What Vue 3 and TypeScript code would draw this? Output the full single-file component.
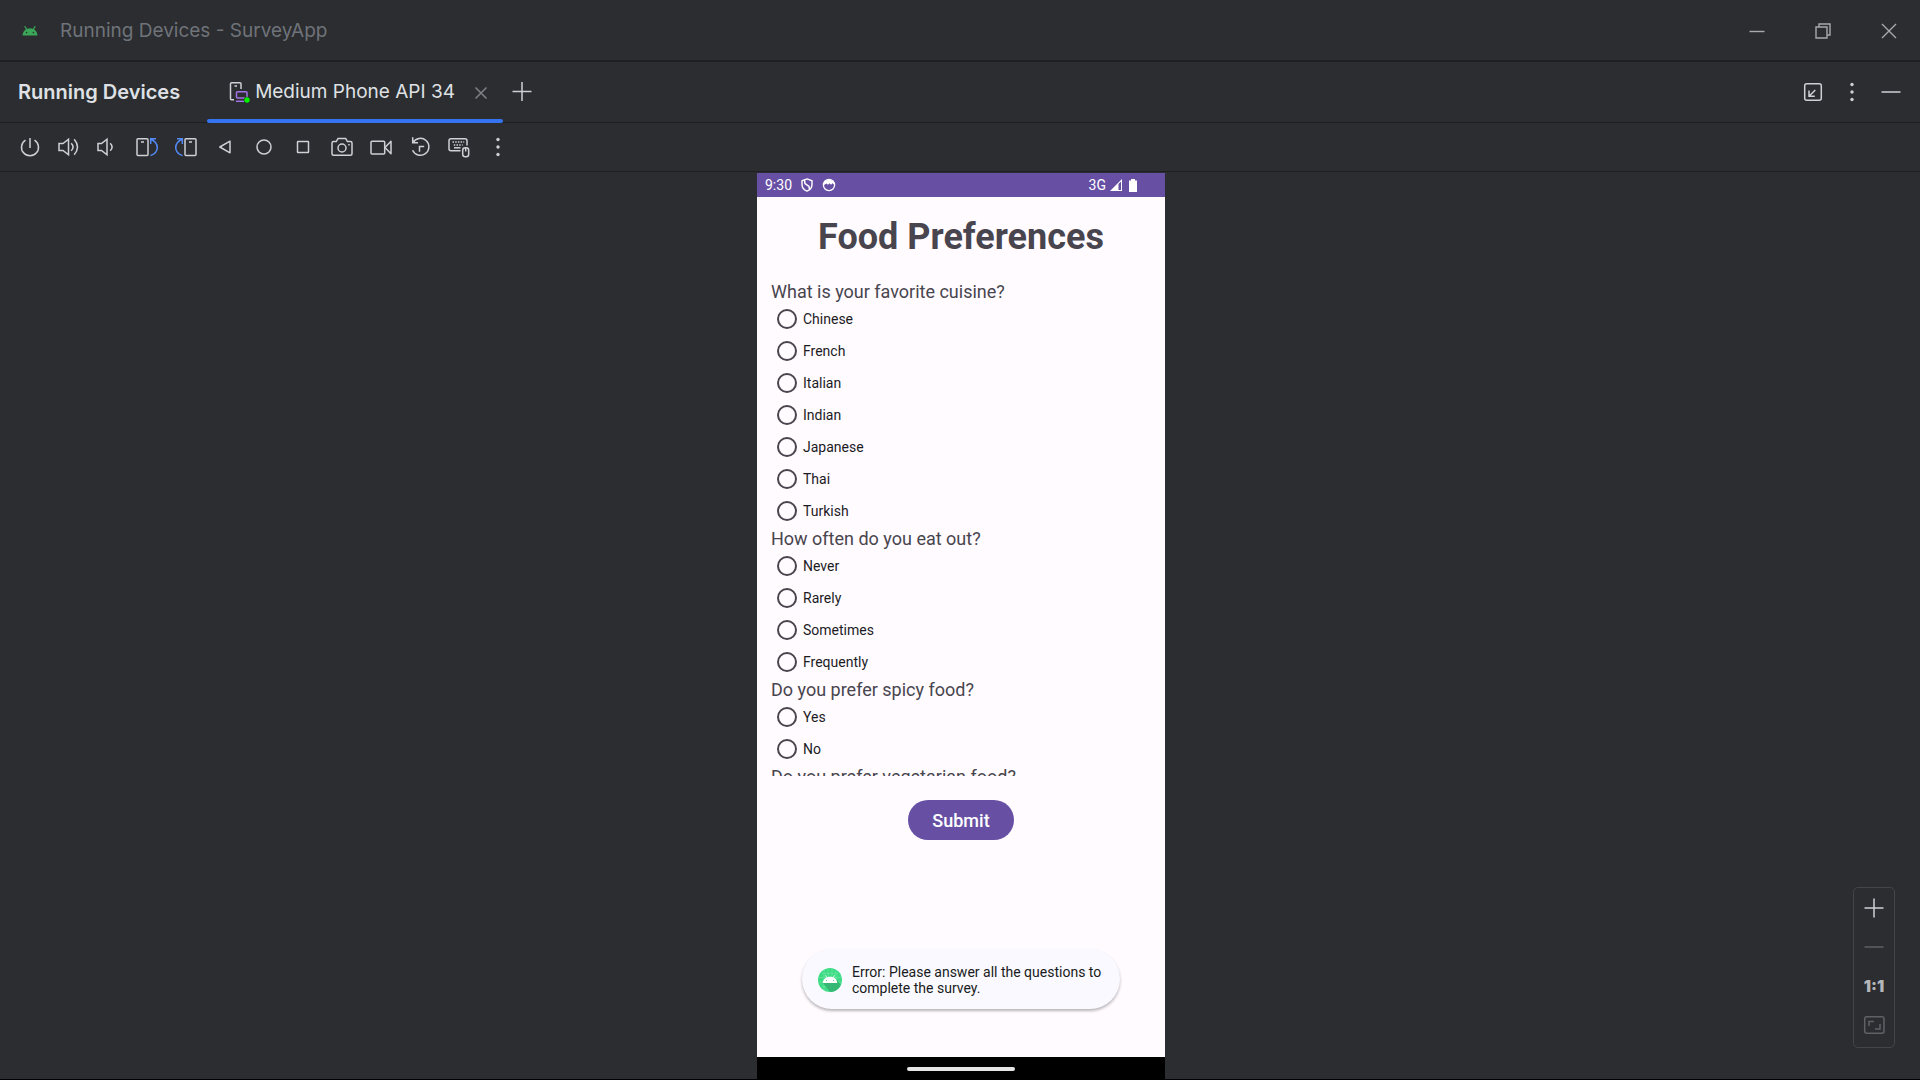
<script setup lang="ts">
import { ref } from 'vue'

interface Question {
  id: string
  text: string
  options: string[]
}

const questions: Question[] = [
  {
    id: 'cuisine',
    text: 'What is your favorite cuisine?',
    options: ['Chinese', 'French', 'Italian', 'Indian', 'Japanese', 'Thai', 'Turkish'],
  },
  {
    id: 'eat-out',
    text: 'How often do you eat out?',
    options: ['Never', 'Rarely', 'Sometimes', 'Frequently'],
  },
  { id: 'spicy', text: 'Do you prefer spicy food?', options: ['Yes', 'No'] },
  { id: 'vegetarian', text: 'Do you prefer vegetarian food?', options: [] },
]

const answers = ref<Record<string, string>>({})
</script>

<template>
  <div class="window">
    <header class="titlebar">
      <svg class="app-icon" viewBox="0 0 16 10" aria-hidden="true">
        <path d="M3 .6L4.6 3.2M13 .6L11.4 3.2" stroke="#3aa657" stroke-width="1.2" stroke-linecap="round" />
        <path d="M.5 9.5C.8 5 4 2.2 8 2.2S15.200 5 15.500 9.500Z" fill="#3aa657" />
        <circle cx="4.600" cy="6.600" r=".8" fill="#2b2d30" />
        <circle cx="11.400" cy="6.600" r=".8" fill="#2b2d30" />
      </svg>
      <span class="window-title">Running Devices - SurveyApp</span>
      <div class="window-controls">
        <button type="button" aria-label="Minimize">
          <svg viewBox="0 0 24 24"><path d="M4.500 12.500H19.500" /></svg>
        </button>
        <button type="button" aria-label="Restore">
          <svg viewBox="0 0 24 24"><path d="M5 8H16V19H5ZM8 8V5H19V16H16" /></svg>
        </button>
        <button type="button" aria-label="Close">
          <svg viewBox="0 0 24 24"><path d="M5 5L19 19M19 5L5 19" /></svg>
        </button>
      </div>
    </header>

    <nav class="tabbar">
      <h1 class="tool-title">Running Devices</h1>
      <div class="tab">
        <svg class="tab-icon" viewBox="0 0 24 24" aria-hidden="true">
          <path d="M7 19.700H4.500A1 1 0 0 1 3.500 18.700V3.700A1 1 0 0 1 4.500 2.700H13A1 1 0 0 1 14 3.700V9" stroke="#ced0d6" stroke-width="1.500" fill="none" />
          <path d="M7.500 6H10" stroke="#ced0d6" stroke-width="1.500" />
          <rect x="9.500" y="11.700" width="10.500" height="6.300" rx="1" stroke="#a571e6" stroke-width="1.500" fill="none" />
          <path d="M9 21.300H17" stroke="#a571e6" stroke-width="1.500" />
          <circle cx="20" cy="20" r="3.200" fill="#2b2d30" />
          <circle cx="20" cy="20" r="2.700" fill="#00f000" />
        </svg>
        <span>Medium Phone API 34</span>
        <button class="tab-close" type="button" aria-label="Close tab">
          <svg viewBox="0 0 24 24"><path d="M6.500 7.500L17.500 18.500M17.500 7.500L6.500 18.500" /></svg>
        </button>
      </div>
      <button class="tab-add" type="button" aria-label="Add device">
        <svg class="ic" viewBox="0 0 24 24"><path d="M12 2V21M2.500 11.500H21.500" /></svg>
      </button>
      <div class="tab-tools">
        <button type="button" aria-label="Dock">
          <svg class="ic" viewBox="0 0 24 24"><rect x="3.700" y="3.700" width="16.600" height="16.600" rx="2" /><path d="M14.300 10L8.300 16M8 10.500V16.300H13.800" /></svg>
        </button>
        <button type="button" aria-label="Options">
          <svg class="dots" viewBox="0 0 24 24"><circle cx="12" cy="4.500" r="1.700" /><circle cx="12" cy="12" r="1.700" /><circle cx="12" cy="19.500" r="1.700" /></svg>
        </button>
        <button type="button" aria-label="Hide">
          <svg class="ic" viewBox="0 0 24 24"><path d="M2.500 12H21.500" /></svg>
        </button>
      </div>
    </nav>

    <div class="toolbar" role="toolbar" aria-label="Device controls">
      <button type="button" aria-label="Power">
        <svg class="ic" viewBox="0 0 24 24"><path d="M7.500 5.100A8.500 8.500 0 1 0 16.500 5.100M12 3V13" /></svg>
      </button>
      <button type="button" aria-label="Volume up">
        <svg class="ic" viewBox="0 0 24 24"><path d="M2 8.500H6L11.500 4.200V19.800L6 15.500H2ZM14.200 8.200Q18 12 14.200 15.800M17.200 4.300Q23.800 12 17.200 19.700" /></svg>
      </button>
      <button type="button" aria-label="Volume down">
        <svg class="ic" viewBox="0 0 24 24"><path d="M2 8.500H5.500L11 4.200V19.800L5.500 15.500H2ZM14.200 8.200Q18 12 14.200 15.800" /></svg>
      </button>
      <button type="button" aria-label="Rotate left">
        <svg class="ic" viewBox="0 0 24 24"><rect x="2" y="3.700" width="11" height="16.800" rx="1" /><path d="M6 7H9" /><path class="blue" d="M21 3.800H15.700V9M15.900 4C24.500 8.500 24.500 17 15.500 20.600" /></svg>
      </button>
      <button type="button" aria-label="Rotate right">
        <svg class="ic" viewBox="0 0 24 24"><rect x="11" y="3.700" width="11" height="16.800" rx="1" /><path d="M15 7H18" /><path class="blue" d="M3 3.800H8.300V9M8.100 4C-.5 8.500 -.5 17 8.500 20.600" /></svg>
      </button>
      <button type="button" aria-label="Back">
        <svg class="ic" viewBox="0 0 24 24"><path d="M6.800 12L17 6.200V17.800Z" stroke-linejoin="round" /></svg>
      </button>
      <button type="button" aria-label="Home">
        <svg class="ic" viewBox="0 0 24 24"><circle cx="12" cy="12" r="7" /></svg>
      </button>
      <button type="button" aria-label="Overview">
        <svg class="ic" viewBox="0 0 24 24"><rect x="6.500" y="6.500" width="11" height="11" rx=".5" /></svg>
      </button>
      <button type="button" aria-label="Screenshot">
        <svg class="ic" viewBox="0 0 24 24"><path d="M2 8Q2 6.500 3.500 6.500H6.300L8 3.500H15.700L17.400 6.500H20.500Q22 6.500 22 8V18.800Q22 20.300 20.500 20.300H3.500Q2 20.300 2 18.800Z" /><circle cx="12" cy="13" r="4" /><path d="M18.200 9.700H19.700" /></svg>
      </button>
      <button type="button" aria-label="Record screen">
        <svg class="ic" viewBox="0 0 24 24"><rect x="2" y="6.200" width="13.700" height="12.800" rx="1" /><path d="M16 12.500L22 6.300V18.700Z" stroke-linejoin="round" /></svg>
      </button>
      <button type="button" aria-label="Snapshots">
        <svg class="ic" viewBox="0 0 24 24"><path d="M4.700 2.300V7.700H10M5 7.600A8.500 8.500 0 1 1 4.600 15.200M11.500 16.700V11.500H16.200" /></svg>
      </button>
      <button type="button" aria-label="Hardware input">
        <svg class="ic" viewBox="0 0 24 24">
          <path d="M13.500 15.800H4Q2 15.800 2 13.800V5.700Q2 3.700 4 3.700H18Q20 3.700 20 5.700V10.500" />
          <path d="M5.500 7H17.200M6.800 10H15.700" stroke-dasharray="1.500 1.200" /><path d="M7 12.800H13.500" />
          <rect x="15.700" y="12.700" width="6" height="9" rx="2.500" /><path d="M18.700 13V16.500" />
        </svg>
      </button>
      <button type="button" aria-label="More">
        <svg class="dots" viewBox="0 0 24 24"><circle cx="12" cy="4.500" r="1.700" /><circle cx="12" cy="12" r="1.700" /><circle cx="12" cy="19.500" r="1.700" /></svg>
      </button>
    </div>

    <main class="stage">
      <section class="phone">
        <div class="status">
          <span>9:30</span>
          <svg class="status-icon" viewBox="0 0 14 14" aria-hidden="true">
            <path d="M7 .9L12 2.800V6.500C12 9.800 10 12 7 13.200C4 12 2 9.800 2 6.500V2.800Z" fill="none" stroke="#fff" stroke-width="1.400" />
            <path d="M4.500 2L5 5.500L9 8.500L9.500 11.500" fill="none" stroke="#fff" stroke-width="1.500" />
          </svg>
          <svg class="status-icon" viewBox="0 0 14 14" aria-hidden="true">
            <circle cx="7" cy="7" r="5.600" fill="none" stroke="#fff" stroke-width="1.300" />
            <path d="M2 3.800Q7 -.5 12 3.800V6.500L10.500 5.300L9 6.800L7.500 5.300L6 6.800L4.500 5.500L2 7Z" fill="#fff" />
          </svg>
          <span class="network">3G</span>
          <svg class="signal" viewBox="0 0 12 12" aria-hidden="true">
            <path d="M0 12L12 0V12Z" fill="#fff" /><path d="M8.500 5V11H11V2.500Z" fill="#6750a4" />
          </svg>
          <svg class="battery" viewBox="0 0 8 13" aria-hidden="true"><path d="M0 1.500H2V0H6V1.500H8V13H0Z" fill="#fff" /></svg>
        </div>

        <h2 class="heading">Food Preferences</h2>

        <form class="survey" @submit.prevent>
          <div class="questions">
            <fieldset v-for="q in questions" :key="q.id">
              <legend>{{ q.text }}</legend>
              <label v-for="option in q.options" :key="option" class="option">
                <input v-model="answers[q.id]" type="radio" :name="q.id" :value="option" />
                <span>{{ option }}</span>
              </label>
            </fieldset>
          </div>
          <div class="actions">
            <button class="submit" type="submit">Submit</button>
          </div>
        </form>

        <div class="toast" role="alert">
          <svg class="toast-icon" viewBox="0 0 24 24" aria-hidden="true">
            <circle cx="12" cy="12" r="12" fill="#3ddc84" />
            <path d="M4 5.500H20M1 9.500H23M1 14H23M4 18.500H20M6 2V22M10 .5V23.500M14 .5V23.500M18 2V22" stroke="#7be8ac" stroke-width=".5" />
            <path d="M5 15L12 23.900A12 12 0 0 0 22.800 17L19 12Z" fill="#35b873" />
            <path d="M7.500 7.300L9 9.800M16.500 7.300L15 9.800" stroke="#fff" stroke-width=".8" />
            <path d="M4.800 15C5 11.300 8 8.800 12 8.800S19 11.300 19.200 15Z" fill="#fff" />
            <circle cx="8.500" cy="12.500" r=".6" fill="#35b873" /><circle cx="15.500" cy="12.500" r=".6" fill="#35b873" />
          </svg>
          <p>Error: Please answer all the questions to complete the survey.</p>
        </div>

        <div class="gesture"><span class="handle"></span></div>
      </section>

      <div class="zoom">
        <button type="button" aria-label="Zoom in">
          <svg class="ic" viewBox="0 0 24 24"><path d="M12 2.500V21.500M2.500 12H21.500" /></svg>
        </button>
        <button type="button" aria-label="Zoom out">
          <svg class="ic dim" viewBox="0 0 24 24"><path d="M2.500 12H21.500" /></svg>
        </button>
        <button type="button" class="one">1:1</button>
        <button type="button" aria-label="Fit to screen">
          <svg class="ic dim" viewBox="0 0 24 24"><rect x="2.700" y="3.700" width="19.300" height="16.600" rx="2" /><path d="M7 13V8.500H12M13 16H18V11" /></svg>
        </button>
      </div>
    </main>
  </div>
</template>

<style>
body {
  margin: 0;
  background: #000;
}
</style>

<style scoped>
.window {
  display: flex;
  flex-direction: column;
  box-sizing: border-box;
  height: 100vh;
  border-bottom: 1px solid #000;
  background: #2b2d30;
  color: #dfe1e5;
  font: 19px/24px Inter, 'Liberation Sans', sans-serif;
}

button {
  display: flex;
  align-items: center;
  justify-content: center;
  margin: 0;
  padding: 0;
  border: 0;
  background: none;
  color: inherit;
  font: inherit;
}

svg {
  display: block;
  flex: none;
}

button svg {
  width: 24px;
  height: 24px;
}

.ic {
  fill: none;
  stroke: #ced0d6;
  stroke-width: 1.5;
}

.ic .blue {
  stroke: #548af7;
}

.ic.dim {
  stroke: #5f6165;
}

.dots {
  fill: #ced0d6;
}

.titlebar {
  display: flex;
  flex: none;
  align-items: center;
  box-sizing: border-box;
  height: 62px;
  padding: 2px 0 0 22px;
  border-bottom: 2px solid #1e1f22;
}

.app-icon {
  width: 16px;
  height: 10px;
}

.window-title {
  margin-left: 22px;
  color: #6f737a;
}

.window-controls {
  display: flex;
  gap: 4px;
  margin-left: auto;
}

.window-controls button {
  width: 62px;
  height: 58px;
}

.window-controls svg {
  fill: none;
  stroke: #a8a9ab;
  stroke-width: 1.4;
}

.tabbar {
  display: flex;
  flex: none;
  height: 60px;
  padding: 0 10px 0 18px;
  border-bottom: 1px solid #1e1f22;
}

.tool-title {
  align-self: center;
  margin: 0;
  font-size: 20px;
  font-weight: 600;
}

.tab {
  position: relative;
  display: flex;
  align-items: center;
  margin-left: 27px;
  padding: 0 10px 0 20px;
}

.tab::after {
  position: absolute;
  right: 0;
  bottom: -1px;
  left: 0;
  height: 4px;
  border-radius: 2px;
  background: #3574f0;
  content: '';
}

.tab-icon {
  width: 24px;
  height: 24px;
  margin-right: 4px;
}

.tab-close {
  margin-left: 14px;
}

.tab-close svg {
  fill: none;
  stroke: #7f8287;
  stroke-width: 1.5;
}

.tab-add {
  margin-left: 7px;
}

.tab-tools {
  display: flex;
  margin-left: auto;
}

.tab-tools button {
  width: 39px;
}

.toolbar {
  display: flex;
  flex: none;
  height: 48px;
  padding-left: 10px;
  border-bottom: 1px solid #1e1f22;
}

.toolbar button {
  width: 39px;
}

.stage {
  position: relative;
  display: flex;
  flex: 1;
  justify-content: center;
  min-height: 0;
  padding: 1px 0 0 2px;
}

.phone {
  position: relative;
  display: flex;
  flex-direction: column;
  height: 100%;
  aspect-ratio: 408 / 906;
  background: #fffbff;
  color: #48454e;
  font-family: Roboto, 'Liberation Sans', sans-serif;
}

.status {
  display: flex;
  flex: none;
  align-items: center;
  height: 24px;
  padding: 0 28px 0 8px;
  background: #6750a4;
  color: #fff;
  font-size: 14px;
}

.status-icon {
  width: 14px;
  height: 14px;
  margin-left: 8px;
}

.network {
  margin-left: auto;
}

.signal {
  width: 12px;
  height: 12px;
  margin-left: 4px;
}

.battery {
  width: 8px;
  height: 13px;
  margin-left: 7px;
}

.heading {
  flex: none;
  margin: 18px 0 21px;
  font-size: 36px;
  font-weight: 700;
  line-height: 44px;
  text-align: center;
}

.survey {
  display: flex;
  flex: 1;
  flex-direction: column;
  min-height: 0;
}

.questions {
  flex: 1;
  min-height: 0;
  padding: 0 14px;
  overflow: hidden auto;
  scrollbar-width: none;
}

fieldset {
  margin: 0;
  padding: 0;
  border: 0;
}

legend {
  padding: 0;
  font-size: 18px;
  line-height: 23px;
}

.option {
  display: flex;
  align-items: center;
  height: 32px;
  padding-left: 6px;
  color: #1c1b1f;
  font-size: 14px;
}

.option input {
  width: 20px;
  height: 20px;
  margin: 0 6px 0 0;
  border: 2px solid #48454e;
  border-radius: 50%;
  box-sizing: border-box;
  appearance: none;
}

.option input:checked {
  border: 6px solid #6750a4;
}

.actions {
  display: flex;
  flex: none;
  justify-content: center;
  height: 257px;
  padding-top: 24px;
}

.submit {
  height: 40px;
  padding: 2px 24px 0;
  border-radius: 20px;
  background: #6750a4;
  color: #fff;
  font-size: 18px;
  font-weight: 500;
}

.toast {
  position: absolute;
  right: 45px;
  bottom: 70px;
  left: 45px;
  display: flex;
  align-items: center;
  box-sizing: border-box;
  height: 60px;
  padding: 2px 16px 0;
  border-radius: 30px;
  background: #f9f9ff;
  box-shadow: 0 2px 3px rgb(0 0 0 / 28%);
  color: #1a1b20;
  font-size: 14px;
  line-height: 16px;
}

.toast-icon {
  width: 24px;
  height: 24px;
}

.toast p {
  margin: 0 0 0 10px;
}

.gesture {
  display: flex;
  flex: none;
  align-items: center;
  justify-content: center;
  height: 22px;
  padding-top: 1px;
  box-sizing: border-box;
  background: #000;
}

.handle {
  width: 108px;
  height: 4px;
  border-radius: 2px;
  background: #e6e6e6;
}

.zoom {
  position: absolute;
  right: 25px;
  bottom: 31px;
  display: flex;
  flex-direction: column;
  box-sizing: border-box;
  width: 42px;
  padding-bottom: 3px;
  border: 1px solid #43454a;
  border-radius: 5px;
}

.zoom button {
  height: 39px;
}

.zoom .one {
  color: #b4b6ba;
  font-size: 16px;
  font-weight: 900;
}
</style>
